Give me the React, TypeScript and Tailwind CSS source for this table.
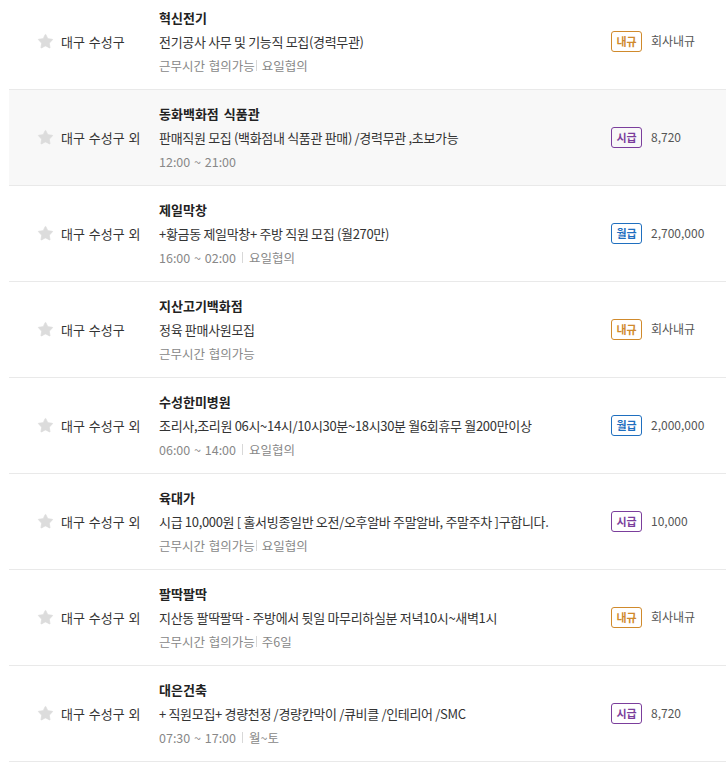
import { Star } from "lucide-react";

type Pay = "내규" | "시급" | "월급";

interface Job {
  company: string;
  title: string;
  area: string;
  time: string;
  day?: string;
  pay: Pay;
  amount: string;
}

const jobs: Job[] = [
  {
    company: "혁신전기",
    title: "전기공사 사무 및 기능직 모집(경력무관)",
    area: "대구 수성구",
    time: "근무시간 협의가능",
    day: "요일협의",
    pay: "내규",
    amount: "회사내규",
  },
  {
    company: "동화백화점 식품관",
    title: "판매직원 모집 (백화점내 식품관 판매) /경력무관 ,초보가능",
    area: "대구 수성구 외",
    time: "12:00 ~ 21:00",
    pay: "시급",
    amount: "8,720",
  },
  {
    company: "제일막창",
    title: "+황금동 제일막창+ 주방 직원 모집 (월270만)",
    area: "대구 수성구 외",
    time: "16:00 ~ 02:00",
    day: "요일협의",
    pay: "월급",
    amount: "2,700,000",
  },
  {
    company: "지산고기백화점",
    title: "정육 판매사원모집",
    area: "대구 수성구",
    time: "근무시간 협의가능",
    pay: "내규",
    amount: "회사내규",
  },
  {
    company: "수성한미병원",
    title: "조리사,조리원 06시~14시/10시30분~18시30분 월6회휴무 월200만이상",
    area: "대구 수성구 외",
    time: "06:00 ~ 14:00",
    day: "요일협의",
    pay: "월급",
    amount: "2,000,000",
  },
  {
    company: "육대가",
    title: "시급 10,000원 [ 홀서빙종일반 오전/오후알바 주말알바, 주말주차 ]구합니다.",
    area: "대구 수성구 외",
    time: "근무시간 협의가능",
    day: "요일협의",
    pay: "시급",
    amount: "10,000",
  },
  {
    company: "팔딱팔딱",
    title: "지산동 팔딱팔딱 - 주방에서 뒷일 마무리하실분 저녁10시~새벽1시",
    area: "대구 수성구 외",
    time: "근무시간 협의가능",
    day: "주6일",
    pay: "내규",
    amount: "회사내규",
  },
  {
    company: "대은건축",
    title: "+ 직원모집+ 경량천정 /경량칸막이 /큐비클 /인테리어 /SMC",
    area: "대구 수성구 외",
    time: "07:30 ~ 17:00",
    day: "월~토",
    pay: "시급",
    amount: "8,720",
  },
];

const badgeStyle: Record<Pay, string> = {
  내규: "border-[#d08a2c] text-[#d08a2c]",
  시급: "border-[#7b3e9c] text-[#7b3e9c]",
  월급: "border-[#1f6fbf] text-[#1f6fbf]",
};

function JobRow({ job, hover }: { job: Job; hover: boolean }) {
  const negotiable = job.time.startsWith("근무시간");
  return (
    <li
      className={`flex h-[96px] items-center border-b border-[#e9e9e9] ${
        hover ? "bg-[#f8f8f8]" : "bg-white"
      }`}
    >
      <div className="flex w-[150px] shrink-0 items-center pl-[28px]">
        <Star
          className="h-[17px] w-[17px] fill-[#dcdcdc] text-[#dcdcdc]"
          strokeWidth={1}
        />
        <span className="ml-[7px] text-[13px] [word-spacing:1px] text-[#333]">
          {job.area}
        </span>
      </div>
      <div className="flex w-[452px] shrink-0 flex-col">
        <p className="h-[24px] text-[13px] font-bold leading-[24px] [word-spacing:2px] text-[#222]">
          {job.company}
        </p>
        <p className="h-[24px] whitespace-nowrap text-[13px] leading-[24px] tracking-[-0.025em] text-[#333]">
          {job.title}
        </p>
        <p className="flex h-[24px] items-center whitespace-pre text-[12.5px] leading-[24px] [word-spacing:1px] text-[#888]">
          <span>{job.time}</span>
          {job.day && (
            <>
              <span
                className={`inline-block h-[11px] w-px bg-[#d8d8d8] ${
                  negotiable ? "ml-[1px] mr-[5px]" : "mx-[6px]"
                }`}
              />
              <span>{job.day}</span>
            </>
          )}
        </p>
      </div>
      <div className="flex items-center">
        <span
          className={`flex h-[21px] w-[31px] items-center justify-center rounded-[3px] border text-[11px] font-bold ${
            badgeStyle[job.pay]
          }`}
        >
          {job.pay}
        </span>
        <span className="ml-[9px] -mt-[2px] text-[12px] text-[#555]">
          {job.amount}
        </span>
      </div>
    </li>
  );
}

export default function App() {
  return (
    <div
      className="h-[765px] w-[726px] overflow-hidden bg-white"
      style={{ fontFamily: '"Noto Sans CJK KR", "Noto Sans", sans-serif' }}
    >
      <ul className="-mt-[6px] ml-[9px]">
        {jobs.map((job, i) => (
          <JobRow key={job.company} job={job} hover={i === 1} />
        ))}
      </ul>
    </div>
  );
}
